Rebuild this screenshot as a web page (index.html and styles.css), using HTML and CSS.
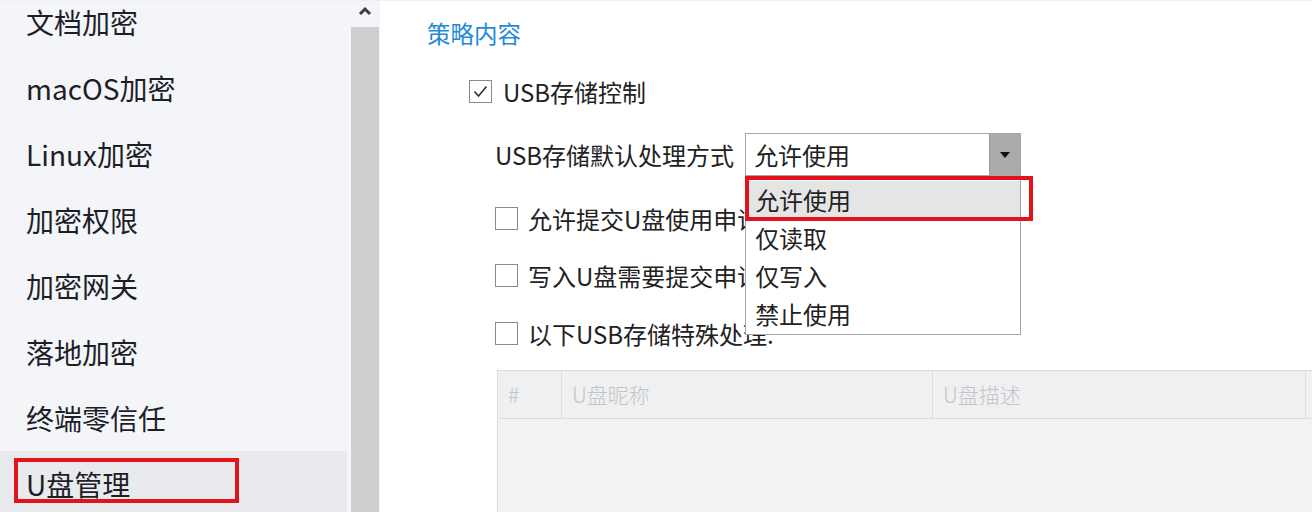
FILE: index.html
```html
<!DOCTYPE html>
<html lang="zh-CN">
<head>
<meta charset="utf-8">
<title>U盘管理</title>
<link rel="stylesheet" href="styles.css">
</head>
<body>
<div class="app">
  <aside class="sidebar">
    <ul class="menu">
      <li class="menu-item">文档加密</li>
      <li class="menu-item">macOS加密</li>
      <li class="menu-item">Linux加密</li>
      <li class="menu-item">加密权限</li>
      <li class="menu-item">加密网关</li>
      <li class="menu-item">落地加密</li>
      <li class="menu-item">终端零信任</li>
      <li class="menu-item active">U盘管理<span class="mark mark-side"></span></li>
    </ul>
    <div class="scrollbar">
      <div class="sb-arrow">
        <svg width="14" height="10" viewBox="0 0 14 10"><path d="M2 8 L7 3 L12 8" fill="none" stroke="#3c3c48" stroke-width="3" stroke-linejoin="miter"/></svg>
      </div>
      <div class="sb-thumb"></div>
    </div>
  </aside>
  <main class="content">
    <h2 class="title">策略内容</h2>
    <div class="row row-main">
      <span class="cb checked">
        <svg width="21" height="21" viewBox="0 0 21 21"><polyline points="4.5,10.5 8.5,15 16.5,5.5" fill="none" stroke="#333" stroke-width="1.6"/></svg>
      </span>
      <span class="label">USB存储控制</span>
    </div>
    <div class="row row-select">
      <span class="label">USB存储默认处理方式</span>
      <div class="select">
        <span class="select-value">允许使用</span>
        <span class="select-btn">
          <svg width="12" height="8" viewBox="0 0 12 8"><polygon points="1,1 11,1 6,7" fill="#111"/></svg>
        </span>
        <ul class="dropdown">
          <li class="opt hover">允许使用</li>
          <li class="opt">仅读取</li>
          <li class="opt">仅写入</li>
          <li class="opt">禁止使用</li>
          <li class="mark mark-opt"></li>
        </ul>
      </div>
    </div>
    <div class="row row-sub r3">
      <span class="cb"></span>
      <span class="label">允许提交U盘使用申请</span>
    </div>
    <div class="row row-sub r4">
      <span class="cb"></span>
      <span class="label">写入U盘需要提交申请</span>
    </div>
    <div class="row row-sub r5">
      <span class="cb"></span>
      <span class="label">以下USB存储特殊处理:</span>
    </div>
    <div class="table">
      <div class="th">#</div>
      <div class="th">U盘昵称</div>
      <div class="th">U盘描述</div>
      <div class="th"></div>
      <div class="tbody"></div>
    </div>
  </main>
</div>
</body>
</html>
```
FILE: styles.css
```css
* { box-sizing: border-box; }
html, body {
  margin: 0;
  padding: 0;
  width: 1312px;
  height: 512px;
  overflow: hidden;
  background: #ffffff;
  font-family: "Noto Sans CJK SC", "Noto Sans", sans-serif;
  color: #222;
}
.app {
  display: flex;
  height: 512px;
  border-top: 1px solid #eef0f2;
}
.sidebar {
  display: flex;
  width: 380px;
  flex: none;
  background: #f3f5f8;
}
.menu {
  list-style: none;
  margin: -12px 0 0 0;
  padding: 0;
  width: 347px;
}
.menu-item {
  position: relative;
  height: 66px;
  line-height: 66px;
  padding-left: 26px;
  font-size: 28px;
  color: #1e1e28;
  white-space: nowrap;
}
.menu-item.active {
  background: #e8eaed;
}
.mark {
  position: absolute;
  border: 4px solid #e3131b;
  display: block;
  pointer-events: none;
}
.mark-side {
  left: 14px;
  top: 7px;
  width: 225px;
  height: 45px;
}
.scrollbar {
  width: 33px;
  display: flex;
  flex-direction: column;
  padding: 0 1px 0 4px;
}
.sb-arrow {
  height: 26px;
  display: flex;
  align-items: center;
  justify-content: center;
  padding-bottom: 6px;
}
.sb-thumb {
  flex: 1;
  background: #cdcfd1;
}
.content {
  flex: 1;
  min-width: 0;
  overflow: hidden;
  padding: 16px 0 0 47px;
  display: flex;
  flex-direction: column;
}
.content > * { flex: none; }
.title {
  margin: 0;
  height: 32px;
  line-height: 32px;
  font-size: 23.5px;
  font-weight: normal;
  color: #1f8ad6;
}
.row {
  display: flex;
  align-items: center;
  height: 40px;
  font-size: 24px;
  white-space: nowrap;
}
.row-main {
  margin-top: 22px;
  padding-left: 42px;
}
.row-main .label { margin-left: 11px; }
.cb {
  width: 23px;
  height: 23px;
  flex: none;
  border: 1px solid #8a8a8a;
  background: #fff;
  display: flex;
  align-items: center;
  justify-content: center;
}
.row-select {
  margin-top: 22px;
  height: 43px;
  padding-left: 68px;
  position: relative;
  z-index: 2;
}
.select {
  position: relative;
  margin-left: 11px;
  width: 276px;
  height: 43px;
  border: 1px solid #a6a6a6;
  display: flex;
  background: #fff;
}
.select-value {
  flex: 1;
  padding-left: 8px;
  line-height: 41px;
  font-size: 24px;
}
.select-btn {
  width: 31px;
  background: #a9aaab;
  border-left: 1px solid #9a9a9a;
  display: flex;
  align-items: center;
  justify-content: center;
}
.dropdown {
  position: absolute;
  top: 42px;
  left: -1px;
  width: 276px;
  margin: 0;
  padding: 4px 0 0 0;
  list-style: none;
  background: #fff;
  border: 1px solid #a6a6a6;
  height: 159px;
}
.opt {
  height: 38px;
  line-height: 38px;
  padding-left: 9px;
  font-size: 24px;
}
.opt.hover { background: #e5e5e5; }
.mark-opt {
  left: -1px;
  top: -1px;
  width: 288px;
  height: 45px;
}
.row-sub {
  padding-left: 68px;
}
.row-sub .label { margin-left: 10px; }
.r3 { margin-top: 22px; }
.r4 { margin-top: 17px; }
.r5 { margin-top: 18px; }
.table {
  margin-top: 17px;
  margin-left: 70px;
  width: 840px;
  display: grid;
  grid-template-columns: 64px 371px 373px 1fr;
  grid-template-rows: 48px 120px;
  border: 1px solid #dcdcdd;
  background: #f1f2f4;
}
.th {
  background: #eff0f2;
  border-bottom: 1px solid #dcdcdd;
  border-right: 1px solid #dcdcdd;
  color: #c3c4c6;
  font-size: 21px;
  font-weight: 300;
  line-height: 46px;
  padding-left: 10px;
  white-space: nowrap;
}
.tbody {
  grid-column: 1 / -1;
  background: #f1f2f4;
}
```
